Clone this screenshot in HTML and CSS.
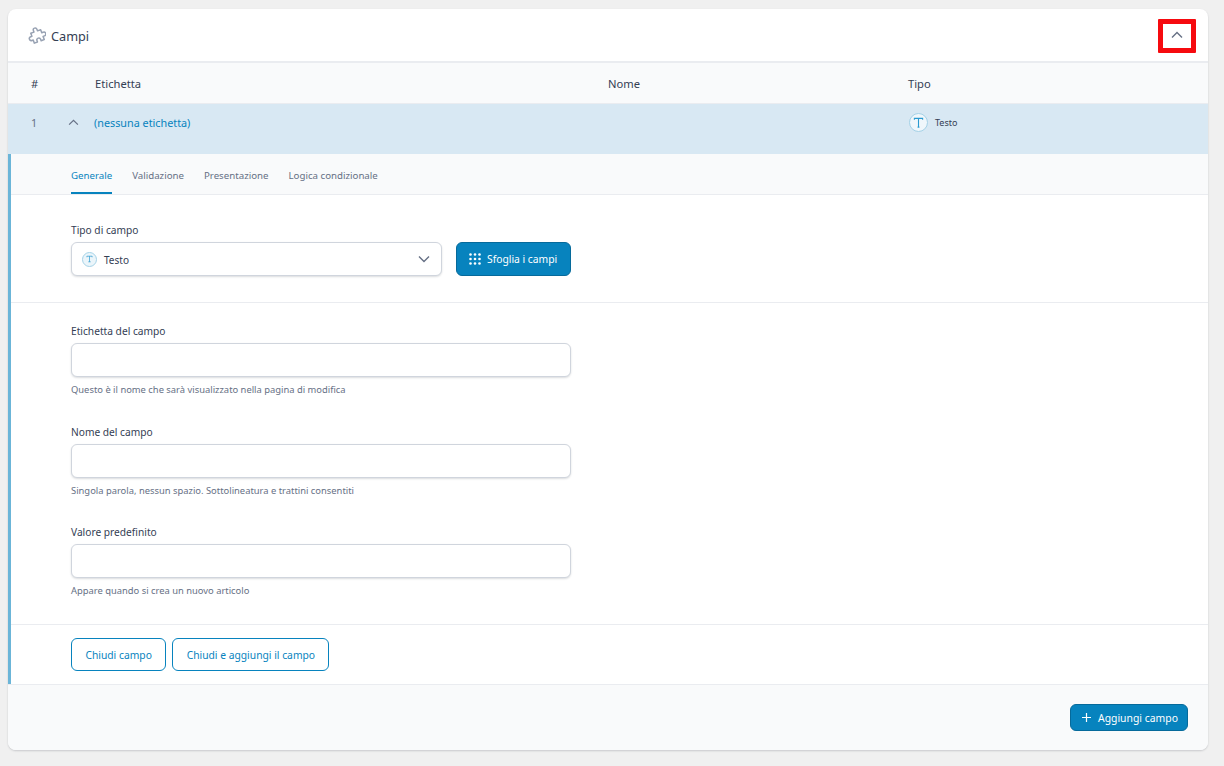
FILE: index.html
```html
<!DOCTYPE html>
<html lang="it">
<head>
<meta charset="utf-8">
<title>Campi</title>
<link rel="stylesheet" href="styles.css">
</head>
<body>
<div class="card">
  <header class="card-head">
    <div class="title">
      <svg class="puzzle" width="18" height="18" viewBox="0 0 24 24" fill="none" stroke="#98a2b3" stroke-width="2" stroke-linejoin="round"><g transform="rotate(-20 12 12)"><path d="M9.500 4.800a2.500 2.500 0 0 1 5 0V7H19v4.300h2a2.600 2.600 0 0 1 0 5.200h-2V21h-4.400v-2a2.600 2.600 0 0 0-5.200 0v2H5v-4.500H3.200a2.600 2.600 0 0 1 0-5.200H5V7h4.500z"/></g></svg>
      <span>Campi</span>
    </div>
    <button class="collapse" aria-label="Comprimi">
      <svg width="12" height="8" viewBox="0 0 12 8" fill="none" stroke="#667085" stroke-width="1.4"><path d="M1 6.500l5-5 5 5"/></svg>
      <span class="highlight"></span>
    </button>
  </header>

  <div class="thead">
    <div class="c-num">#</div>
    <div class="c-label">Etichetta</div>
    <div class="c-name">Nome</div>
    <div class="c-type">Tipo</div>
  </div>

  <div class="row">
    <div class="c-num">1</div>
    <svg class="row-chev" width="11" height="7" viewBox="0 0 12 8" fill="none" stroke="#667085" stroke-width="1.4"><path d="M1 6.500l5-5 5 5"/></svg>
    <div class="c-label row-link">(nessuna etichetta)</div>
    <div class="c-name"></div>
    <div class="c-type row-type">
      <span class="type-badge big"><svg width="11" height="11" viewBox="0 0 12 12" fill="none" stroke="#2a9ad0" stroke-width="1.200"><path d="M1.500 3V1.500h9V3M6 1.500v9.500M5 11h2"/></svg></span>
      <span class="row-type-text">Testo</span>
    </div>
  </div>

  <div class="editor">
    <nav class="tabs">
      <a class="tab active">Generale</a>
      <a class="tab">Validazione</a>
      <a class="tab">Presentazione</a>
      <a class="tab">Logica condizionale</a>
    </nav>

    <section class="sec sec-type">
      <label class="lbl">Tipo di campo</label>
      <div class="type-line">
        <div class="select">
          <span class="type-badge"><svg width="7" height="8" viewBox="0 0 12 12" fill="none" stroke="#2a9ad0" stroke-width="1.200"><path d="M1.500 3V1.200h9V3M6 1.200v9.600M4 10.800h4"/></svg></span>
          <span class="select-text">Testo</span>
          <svg class="select-chev" width="12" height="8" viewBox="0 0 12 8" fill="none" stroke="#667085" stroke-width="1.4"><path d="M1 1.500l5 5 5-5"/></svg>
        </div>
        <button class="btn-primary browse">
          <svg width="12" height="12" viewBox="0 0 12 12" fill="#fff"><circle cx="1.500" cy="1.500" r="1.300"/><circle cx="6" cy="1.500" r="1.300"/><circle cx="10.500" cy="1.500" r="1.300"/><circle cx="1.500" cy="6" r="1.300"/><circle cx="6" cy="6" r="1.300"/><circle cx="10.500" cy="6" r="1.300"/><circle cx="1.500" cy="10.500" r="1.300"/><circle cx="6" cy="10.500" r="1.300"/><circle cx="10.500" cy="10.500" r="1.300"/></svg>
          Sfoglia i campi
        </button>
      </div>
    </section>

    <section class="sec sec-fields">
      <div class="field">
        <label class="lbl">Etichetta del campo</label>
        <input class="input" type="text">
        <p class="hint">Questo è il nome che sarà visualizzato nella pagina di modifica</p>
      </div>
      <div class="field">
        <label class="lbl">Nome del campo</label>
        <input class="input" type="text">
        <p class="hint">Singola parola, nessun spazio. Sottolineatura e trattini consentiti</p>
      </div>
      <div class="field">
        <label class="lbl">Valore predefinito</label>
        <input class="input" type="text">
        <p class="hint">Appare quando si crea un nuovo articolo</p>
      </div>
    </section>

    <section class="sec-actions">
      <button class="btn-outline">Chiudi campo</button>
      <button class="btn-outline">Chiudi e aggiungi il campo</button>
    </section>
  </div>

  <footer class="card-foot">
    <button class="btn-primary add">
      <svg width="11" height="11" viewBox="0 0 11 11" fill="none" stroke="#fff" stroke-width="1.2"><path d="M5.500 1v9M1 5.500h9"/></svg>
      Aggiungi campo
    </button>
  </footer>
</div>
</body>
</html>
```
FILE: styles.css
```css
* { box-sizing: border-box; }
html, body { height: 100%; }
body {
  margin: 0;
  padding: 9px 16px 0 8px;
  background: #f0f0f0;
  font-family: "Noto Sans", "Open Sans", sans-serif;
  color: #344054;
  overflow: hidden;
}
button { font-family: inherit; cursor: pointer; }
.card {
  background: #fff;
  border-radius: 8px;
  box-shadow: 0 1px 2px rgba(16,24,40,.18);
  overflow: hidden;
  width: 1200px;
}
.card-head {
  height: 54px;
  border-bottom: 2px solid #eaecf0;
  display: flex;
  align-items: center;
  justify-content: space-between;
  padding: 0 25px 0 20px;
}
.title { display: flex; align-items: center; gap: 5px; font-size: 12.7px; color: #344054; }
.title span { padding-top: 2px; }
.collapse {
  position: relative;
  border: 0; background: none; padding: 0;
  width: 12px; height: 8px;
  display: flex; margin-top: -1px;
}
.highlight {
  position: absolute;
  left: -13px; top: -12px;
  width: 38px; height: 34px;
  border: 5px solid #f60a0f;
  border-radius: 1px;
}
.thead, .row { display: flex; align-items: center; }
.thead {
  height: 41px;
  background: #f9fafb;
  border-bottom: 1px solid #eaecf0;
  font-size: 11.2px;
  color: #344054;
}
.row { height: 50px; background: #d8e8f3; font-size: 10.8px; align-items: flex-start; padding-top: 10px; }
.c-num { width: 87px; padding-left: 23px; flex: none; line-height: 17px; }
.row .c-num { color: #667085; width: 60px; }
.row-chev { flex: none; margin-top: 5px; margin-right: 15px; }
.c-label { width: 513px; flex: none; line-height: 17px; }
.c-name { width: 300px; flex: none; line-height: 17px; }
.row-link { color: #0783be; width: 515px; }
.row-type { display: flex; align-items: center; gap: 7px; margin-top: -1px; }
.row-type-text { font-size: 9px; color: #344054; }
.type-badge {
  display: inline-flex; align-items: center; justify-content: center;
  width: 15px; height: 15px;
  border-radius: 50%;
  background: #ebf5fa;
  border: 1px solid #a5d2e7;
  flex: none;
}
.type-badge.big { width: 19px; height: 19px; background: #f0f7fb; }
.editor { border-left: 3px solid #6bb5d8; }
.tabs {
  height: 41px;
  background: #f9fafb;
  border-bottom: 1px solid #eaecf0;
  display: flex;
  gap: 20px;
  padding-left: 60px;
  font-size: 9.7px;
}
.tab { color: #667085; line-height: 43px; height: 40px; }
.tab.active { color: #0783be; border-bottom: 2px solid #0783be; }
.sec { border-bottom: 1px solid #eaecf0; padding-left: 60px; }
.sec-type { height: 108px; padding-top: 28px; }
.lbl { display: block; font-size: 10.2px; line-height: 14px; color: #344054; }
.type-line { display: flex; gap: 14px; margin-top: 5px; }
.select {
  width: 371px; height: 34px;
  border: 1px solid #d0d5dd;
  border-radius: 6px;
  background: #fff;
  box-shadow: 0 1px 2px rgba(16,24,40,.15);
  display: flex; align-items: center;
  padding: 0 11px 0 10px;
  font-size: 10px;
  color: #344054;
}
.select-text { margin-left: 7px; flex: 1; padding-top: 2px; }
.btn-primary {
  background: #0783be;
  border: 1px solid #066a9b;
  border-radius: 6px;
  color: #fff;
  display: inline-flex; align-items: center;
  font-size: 10.3px;
}
.browse { width: 115px; height: 34px; gap: 6px; padding: 0 0 0 12px; }
.sec-fields { height: 322px; padding-top: 21px; display: flex; flex-direction: column; gap: 21px; }
.field { height: 79.5px; width: 500px; }
.input {
  display: block;
  width: 500px; height: 34px;
  border: 1px solid #d0d5dd;
  border-radius: 6px;
  background: #fff;
  box-shadow: 0 1px 2px rgba(16,24,40,.15);
  margin-top: 5px;
}
.hint { margin: 6px 0 0; font-size: 9.4px; line-height: 13px; color: #667085; }
.sec-actions { height: 59px; padding: 13px 0 0 60px; display: flex; gap: 6px; }
.btn-outline {
  height: 33px;
  padding: 0 13.4px;
  background: #fff;
  color: #0783be;
  border: 1px solid #0783be;
  border-radius: 6px;
  font-size: 10.3px;
}
.card-foot {
  height: 66px;
  background: #f9fafb;
  border-top: 1px solid #eaecf0;
  display: flex;
  justify-content: flex-end;
  padding: 19px 20px 0 0;
}
.add { width: 118px; height: 27px; gap: 6px; padding: 0 0 0 10px; font-size: 10.4px; }
```
